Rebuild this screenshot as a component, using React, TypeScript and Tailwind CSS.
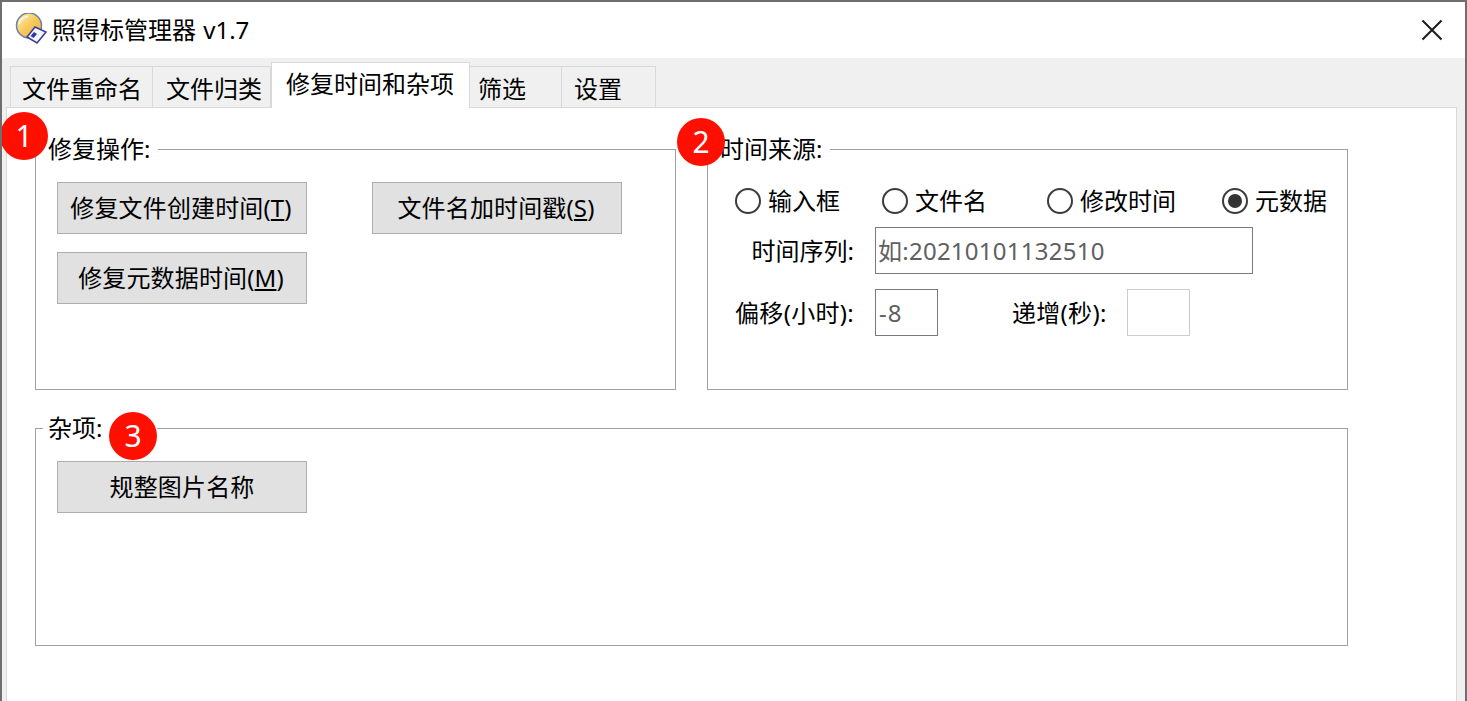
import React from 'react';

const FONT = "font-['Noto_Sans','Noto_Sans_CJK_SC',sans-serif]";

const tabs = [
  { label: '文件重命名', w: 'w-[143px]', pl: 'pl-[11px]' },
  { label: '文件归类', w: 'w-[118px]', pl: 'pl-[13px]' },
  { label: '修复时间和杂项', w: 'w-[199px]', pl: 'pl-[14px]', active: true },
  { label: '筛选', w: 'w-[92px]', pl: 'pl-[8px]' },
  { label: '设置', w: 'w-[94px]', pl: 'pl-[12px]' },
];

const AppIcon = () => (
  <svg width="34" height="34" viewBox="0 0 34 34" className="shrink-0">
    <defs>
      <linearGradient id="disc" x1="0" y1="0" x2="1" y2="1">
        <stop offset="0" stopColor="#fff3c4" />
        <stop offset="0.5" stopColor="#f7c95a" />
        <stop offset="1" stopColor="#eeb040" />
      </linearGradient>
    </defs>
    <circle cx="14" cy="12.5" r="12.5" fill="url(#disc)" stroke="#6f7fa8" strokeWidth="1.5" />
    <path d="M4 11 A10 10 0 0 1 13 3.5" fill="none" stroke="#fff" strokeWidth="1.5" opacity="0.8" />
    <path d="M20 14 L31 19 L22 30 L12 24 Z" fill="#f4f5fb" stroke="#3d3f96" strokeWidth="1.6" />
    <path d="M15.5 23 L19 19 L22 21 L18.5 25 Z" fill="#2f35a8" />
  </svg>
);

const Button = ({ children, tight }: { children: React.ReactNode; tight?: boolean }) => (
  <button className={`h-[52px] w-[250px] ${tight ? '' : 'pr-[2px]'} bg-[#e1e1e1] border border-[#adadad] text-[24px] tracking-[0.15px] text-black leading-none ${FONT}`}>
    {children}
  </button>
);

const Radio = ({ label, checked }: { label: string; checked?: boolean }) => (
  <div className="flex items-center gap-[7px]">
    <span className="w-[26px] h-[26px] rounded-full border-2 border-[#3c3c3c] bg-white flex items-center justify-center">
      {checked && <span className="w-[14px] h-[14px] rounded-full bg-[#333333]" />}
    </span>
    <span className="text-[24px] leading-[30px] text-black">{label}</span>
  </div>
);

const Group = ({ title, className, legendClass = 'pr-[8px]', children }: { title: string; className: string; legendClass?: string; children: React.ReactNode }) => (
  <fieldset className={`border border-[#a0a0a0] ${className}`}>
    <legend className={`ml-[7px] pl-[5px] text-[24px] leading-[32px] text-black ${legendClass}`}>{title}</legend>
    {children}
  </fieldset>
);

const Badge = ({ n, className }: { n: number; className: string }) => (
  <div className={`absolute w-[48px] h-[48px] rounded-full bg-[#ff0f00] text-white text-[30px] leading-[48px] text-center ${className}`}>
    {n}
  </div>
);

export default function App() {
  return (
    <div className={`relative w-[1467px] h-[701px] overflow-hidden bg-[#f0f0f0] border-t-2 border-x-2 border-[#6e6e6e] ${FONT}`}>
      {/* Title bar */}
      <div className="h-[56px] bg-white flex items-center pl-[13px]">
        <AppIcon />
        <span className="ml-[3px] text-[24px] text-black [word-spacing:1px]">照得标管理器 v1.7</span>
        <svg width="22" height="22" viewBox="0 0 22 22" className="ml-auto mr-[22px]">
          <path d="M1.5 1.5 L20.5 20.5 M20.5 1.5 L1.5 20.5" stroke="#1a1a1a" strokeWidth="2" />
        </svg>
      </div>

      {/* Tabs */}
      <div className="flex items-end h-[50px] pl-[8px] relative z-10">
        {tabs.map((t) =>
          t.active ? (
            <div key={t.label} className={`${t.w} ${t.pl} h-[46px] bg-white border border-b-0 border-[#d9d9d9] text-[24px] leading-[42px] text-black`}>
              {t.label}
            </div>
          ) : (
            <div key={t.label} className={`${t.w} ${t.pl} h-[42px] bg-[#f0f0f0] border border-l-0 first:border-l border-[#d9d9d9] text-[24px] leading-[44px] text-black`}>
              {t.label}
            </div>
          ),
        )}
      </div>

      {/* Tab page */}
      <div className="relative ml-[4px] w-[1451px] h-[600px] -mt-px bg-white border border-[#d9d9d9] pl-[28px] pt-[25px]">
        <div className="flex gap-[31px]">
          <Group title="修复操作:" className="w-[641px] h-[257px]">
            <div className="pl-[21px] pt-[17px] flex flex-col gap-[18px]">
              <div className="flex gap-[65px]">
                <Button>
                  修复文件创建时间(<span className="underline underline-offset-2">T</span>)
                </Button>
                <Button>
                  文件名加时间戳(<span className="underline underline-offset-2">S</span>)
                </Button>
              </div>
              <Button>
                修复元数据时间(<span className="underline underline-offset-2">M</span>)
              </Button>
            </div>
          </Group>
          <Group title="时间来源:" className="w-[641px] h-[257px]">
            <div className="pt-[21px]">
              <div className="grid grid-cols-[147px_165px_175px_auto] h-[30px] pl-[27px] items-center">
                <Radio label="输入框" />
                <Radio label="文件名" />
                <Radio label="修改时间" />
                <Radio label="元数据" checked />
              </div>
              <div className="flex items-center mt-[11px]">
                <span className="w-[146px] text-right text-[24px] text-black">时间序列:</span>
                <input
                  placeholder="如:20210101132510"
                  className="ml-[21px] w-[378px] h-[47px] border border-[#7a7a7a] px-[2px] text-[24px] tracking-[0.25px] text-[#606060] placeholder:text-[#606060] bg-white outline-none"
                />
              </div>
              <div className="flex items-center mt-[15px]">
                <span className="w-[146px] text-right text-[24px] tracking-[0.3px] text-black">偏移(小时):</span>
                <input
                  defaultValue="-8"
                  className="ml-[21px] w-[63px] h-[47px] border border-[#7a7a7a] px-[3px] text-[24px] tracking-[1px] text-[#606060] bg-white outline-none"
                />
                <span className="ml-[74px] w-[94px] text-right text-[24px] tracking-[0.3px] text-black whitespace-nowrap">递增(秒):</span>
                <input className="ml-[21px] w-[63px] h-[47px] border border-[#cccccc] bg-white outline-none" />
              </div>
            </div>
          </Group>
        </div>

        <Group title="杂项:" className="w-[1313px] h-[234px] mt-[22px]" legendClass="pr-[55px]">
          <div className="pl-[21px] pt-[17px]">
            <Button tight>规整图片名称</Button>
          </div>
        </Group>
      </div>

      {/* Callout badges */}
      <Badge n={1} className="left-[-2px] top-[110px]" />
      <Badge n={2} className="left-[675px] top-[116px]" />
      <Badge n={3} className="left-[107px] top-[410px]" />
    </div>
  );
}
